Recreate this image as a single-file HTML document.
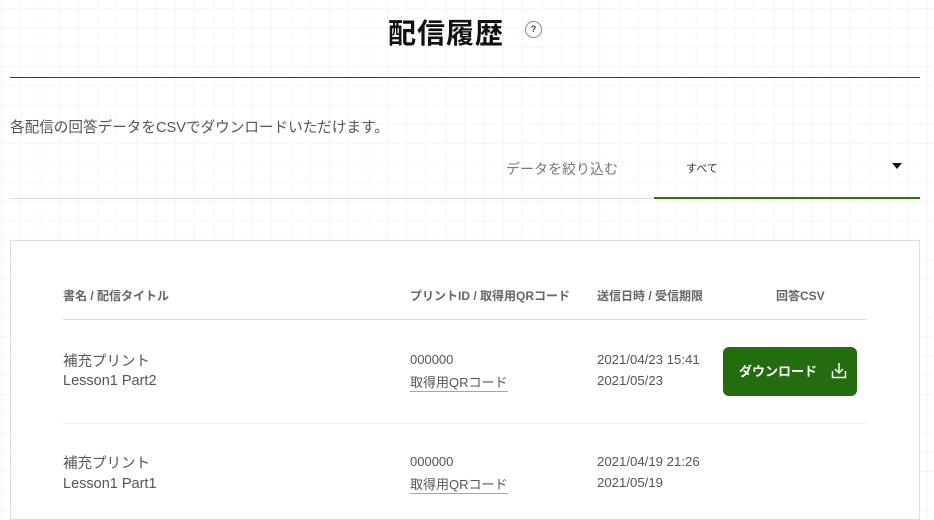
<!DOCTYPE html>
<html><head><meta charset="utf-8"><style>
*{margin:0;padding:0;box-sizing:border-box}
body{width:934px;height:509px;overflow:hidden;position:relative;font-family:"Liberation Sans","Noto Sans CJK JP",sans-serif;color:#555;
background-color:#fff;background-image:linear-gradient(#f3f6fa 1px,transparent 1px),linear-gradient(90deg,#f3f6fa 1px,transparent 1px);background-size:19.3px 19.3px;background-position:1px 8px}
.a{position:absolute;white-space:nowrap}
h1{position:absolute;left:388px;top:12px;font-size:28px;font-weight:bold;color:#111;letter-spacing:1px}
.q{position:absolute;left:525px;top:21px;width:17px;height:17px;border:1.5px solid #6aa85a;border-radius:50%;font-size:9px;font-weight:bold;color:#444;text-align:center;line-height:14px}
.card{position:absolute;left:10px;top:240px;width:910px;height:280px;background:#fff;border:1px solid #ddd}
.h{font-size:12px;font-weight:bold;color:#666}
.t{font-size:14px;color:#555}
.lnk{border-bottom:1.5px solid #8cc63f;padding-bottom:0}
.btn{position:absolute;left:723px;top:347px;width:134px;height:49px;background:#236c10;border-radius:6px;color:#fff;font-size:13px;font-weight:bold}
</style></head><body>
<h1>配信履歴</h1>
<div class="q">?</div>
<div class="a" style="left:10px;top:77px;width:910px;height:1px;background:#2c4a22"></div>
<div class="a t" style="left:10px;top:116px;font-size:14.6px">各配信の回答データをCSVでダウンロードいただけます。</div>
<div class="a t" style="left:506px;top:159px;color:#777">データを絞り込む</div>
<div class="a" style="left:686px;top:160px;font-size:11px;color:#333">すべて</div>
<svg class="a" style="left:892px;top:163px" width="10" height="7"><path d="M0 0H10L5 6Z" fill="#111"/></svg>
<div class="a" style="left:10px;top:198px;width:645px;height:1px;background:#ddd"></div>
<div class="a" style="left:654px;top:197px;width:266px;height:2px;background:#2a7a0a"></div>
<div class="card"></div>
<div class="a h" style="left:63px;top:287px">書名 / 配信タイトル</div>
<div class="a h" style="left:410px;top:287px">プリントID / 取得用QRコード</div>
<div class="a h" style="left:597px;top:287px">送信日時 / 受信期限</div>
<div class="a h" style="left:776px;top:287px">回答CSV</div>
<div class="a" style="left:63px;top:319px;width:804px;height:1px;background:#ddd"></div>
<div class="a t" style="left:63px;top:350px;font-size:14.5px">補充プリント</div>
<div class="a t" style="left:63px;top:373px;font-size:14.5px">Lesson1 Part2</div>
<div class="a t" style="left:410px;top:352px;font-size:13px">000000</div>
<div class="a t lnk" style="left:410px;top:372px;font-size:13px">取得用QRコード</div>
<div class="a t" style="left:597px;top:352px;font-size:13.2px">2021/04/23 15:41</div>
<div class="a t" style="left:597px;top:373px;font-size:13.2px">2021/05/23</div>
<div class="btn"><span class="a" style="left:16px;top:14px">ダウンロード</span>
<svg class="a" style="left:108px;top:15px" width="16" height="17" fill="none" stroke="#fff" stroke-width="1.5"><path d="M8 1V11M4 7L8 11L12 7M1.5 9V15.5H14.5V9"/></svg></div>
<div class="a" style="left:63px;top:423px;width:804px;height:1px;background:#f0f0f0"></div>
<div class="a t" style="left:63px;top:452px;font-size:14.5px">補充プリント</div>
<div class="a t" style="left:63px;top:476px;font-size:14.5px">Lesson1 Part1</div>
<div class="a t" style="left:410px;top:454px;font-size:13px">000000</div>
<div class="a t lnk" style="left:410px;top:474px;font-size:13px">取得用QRコード</div>
<div class="a t" style="left:597px;top:454px;font-size:13.2px">2021/04/19 21:26</div>
<div class="a t" style="left:597px;top:475px;font-size:13.2px">2021/05/19</div>
</body></html>
